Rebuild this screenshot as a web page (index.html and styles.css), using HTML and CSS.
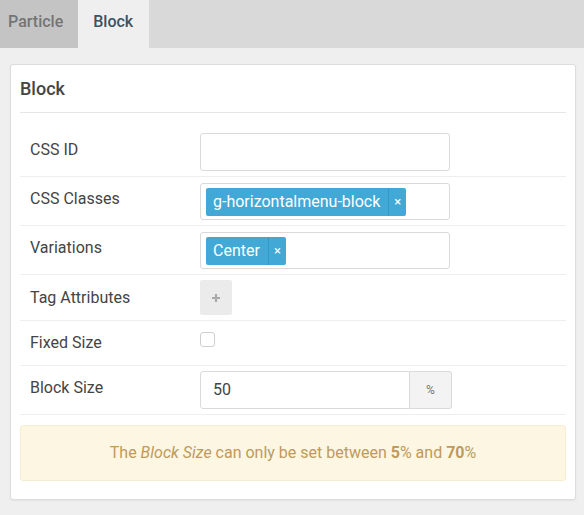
FILE: index.html
```html
<!DOCTYPE html>
<html>
<head>
<meta charset="utf-8">
<link rel="stylesheet" href="styles.css">
</head>
<body>
<div class="tabs">
  <div class="tab tab-first">Particle</div>
  <div class="tab tab-active">Block</div>
</div>
<div class="content">
  <div class="card">
    <h2 class="card-title">Block</h2>
    <div class="row row-input">
      <div class="label">CSS ID</div>
      <div class="field"><div class="input"></div></div>
    </div>
    <div class="row row-input">
      <div class="label">CSS Classes</div>
      <div class="field">
        <div class="input input-tags">
          <span class="tag"><span class="tag-text">g-horizontalmenu-block</span><span class="tag-x">×</span></span>
        </div>
      </div>
    </div>
    <div class="row row-input">
      <div class="label">Variations</div>
      <div class="field">
        <div class="input input-tags">
          <span class="tag"><span class="tag-text">Center</span><span class="tag-x">×</span></span>
        </div>
      </div>
    </div>
    <div class="row">
      <div class="label">Tag Attributes</div>
      <div class="field">
        <div class="add-btn">
          <svg width="10" height="10" viewBox="0 0 10 10"><path d="M5 1v8M1 5h8" stroke="#a9a9a9" stroke-width="2.2"/></svg>
        </div>
      </div>
    </div>
    <div class="row">
      <div class="label">Fixed Size</div>
      <div class="field"><div class="checkbox"></div></div>
    </div>
    <div class="row row-input">
      <div class="label">Block Size</div>
      <div class="field">
        <div class="input-group">
          <div class="input input-size">50</div>
          <div class="addon">%</div>
        </div>
      </div>
    </div>
    <div class="alert">The <em>Block Size</em> can only be set between <strong>5</strong>% and <strong>70</strong>%</div>
  </div>
</div>
</body>
</html>
```

FILE: styles.css
```css
html, body {
  margin: 0;
  padding: 0;
}
body {
  background: #efefef;
  font-family: Roboto, "Liberation Sans", sans-serif;
  color: #444;
  width: 584px;
  height: 515px;
  overflow: hidden;
}
.tabs {
  display: flex;
  height: 48px;
  background: #d9d9d9;
}
.tab {
  padding: 10px 16px 14px 15px;
  line-height: 24px;
  font-size: 16px;
  font-weight: 500;
  color: #747474;
}
.tab-first {
  background: #c4c4c4;
  padding-left: 8px;
  padding-right: 15px;
}
.tab-active {
  background: #efefef;
  color: #3c5263;
}
.content {
  padding: 16px 8px 0 10px;
}
.card {
  background: #fff;
  border: 1px solid #dcdcdc;
  border-radius: 3px;
  box-shadow: 0 1px 2px rgba(0,0,0,0.06);
  padding: 10px 9px 18px 9px;
}
.card-title {
  margin: 0 0 15px;
  padding: 2px 0 11px;
  font-size: 18px;
  line-height: 24px;
  font-weight: 500;
  color: #444;
  border-bottom: 1px solid #e6e6e6;
}
.row {
  display: flex;
  align-items: center;
  padding: 5px 10px;
  border-bottom: 1px solid #eeeeee;
  min-height: 34px;
}
.label {
  width: 170px;
  font-size: 16px;
  line-height: 34px;
  color: #444;
}
.row-input .label {
  padding-bottom: 4px;
}
.field {
  flex: 1;
  display: flex;
}
.input {
  box-sizing: border-box;
  width: 250px;
  height: 38px;
  border: 1px solid #dadada;
  border-radius: 3px;
  background: #fff;
}
.input-tags {
  height: 37px;
  padding: 4px 5px;
  display: flex;
  align-items: flex-start;
}
.tag {
  display: flex;
  height: 28px;
  background: #42a8d6;
  color: #fff;
  border-radius: 2px;
  font-size: 16px;
  line-height: 28px;
}
.tag-text {
  padding: 0 8px 0 7px;
}
.tag-x {
  width: 17px;
  text-align: center;
  font-size: 13px;
  border-left: 1px solid #3898c5;
}
.add-btn {
  width: 32px;
  height: 35px;
  background: #ebebeb;
  border-radius: 2px;
  display: flex;
  align-items: center;
  justify-content: center;
}
.checkbox {
  box-sizing: border-box;
  width: 15px;
  height: 15px;
  border: 1px solid #cfcfcf;
  border-radius: 3px;
  background: #fff;
  margin-bottom: 7px;
}
.input-group {
  display: flex;
}
.input-size {
  width: 210px;
  border-radius: 3px 0 0 3px;
  padding-left: 12px;
  font-size: 16px;
  line-height: 36px;
  color: #444;
}
.addon {
  box-sizing: border-box;
  width: 42px;
  height: 38px;
  border: 1px solid #dadada;
  border-left: none;
  border-radius: 0 3px 3px 0;
  background: #f3f3f3;
  color: #777;
  font-size: 12px;
  line-height: 36px;
  text-align: center;
}
.alert {
  margin-top: 10px;
  padding: 15px;
  line-height: 24px;
  font-size: 16px;
  text-align: center;
  background: #fcf6e3;
  border: 1px solid #f6edd2;
  border-radius: 3px;
  color: #bf9a5b;
}
.alert strong {
  font-weight: 700;
}
```
